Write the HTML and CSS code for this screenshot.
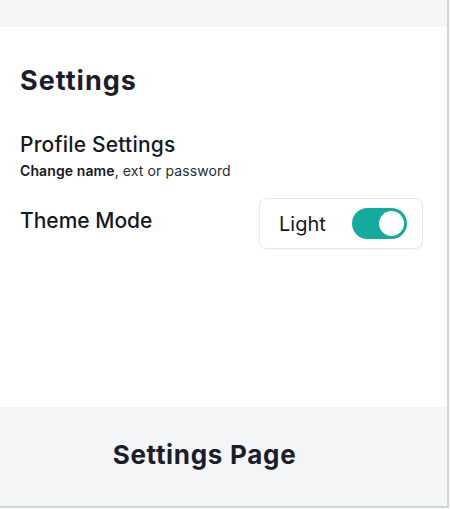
FILE: index.html
```html
<!DOCTYPE html>
<html>
<head>
<meta charset="utf-8">
<link rel="stylesheet" href="styles.css">
</head>
<body>
<div class="frame">
  <div class="topbar"></div>
  <main class="panel">
    <h1 class="title">Settings</h1>
    <section class="item">
      <h2 class="item-title">Profile Settings</h2>
      <p class="item-sub"><strong>Change name</strong>, ext or password</p>
    </section>
    <section class="row">
      <h2 class="item-title">Theme Mode</h2>
      <div class="toggle-card">
        <span class="toggle-label">Light</span>
        <span class="switch"><span class="knob"></span></span>
      </div>
    </section>
  </main>
  <footer class="footer">Settings Page</footer>
</div>
</body>
</html>
```
FILE: styles.css
```css
* { box-sizing: border-box; }
html, body { margin: 0; padding: 0; background: #ffffff; }
body { font-family: Inter, "Noto Sans", sans-serif; color: #1b1e2a; }
.frame {
  width: 449px;
  height: 508px;
  border-right: 2px solid #d3d5da;
  border-bottom: 2px solid #d3d5da;
  display: flex;
  flex-direction: column;
  background: #ffffff;
}
.topbar { height: 27px; background: #f6f6f8; flex: none; }
.panel { height: 380px; flex: none; padding: 37px 24px 0 20px; }
.title { margin: 0; font-size: 27px; font-weight: 700; line-height: 34px; letter-spacing: 1px; }
.item { margin-top: 34px; }
.item-title { margin: 0; font-size: 21px; font-weight: 500; line-height: 25px; letter-spacing: 0.2px; color: #16181f; }
.item-sub { margin: 5px 0 0; font-size: 14px; line-height: 18px; letter-spacing: 0.1px; color: #2a2d36; }
.item-sub strong { font-weight: 600; color: #16181f; }
.row { margin-top: 18px; display: flex; justify-content: space-between; align-items: flex-start; }
.row .item-title { margin-top: 10px; letter-spacing: 0; }
.toggle-card {
  width: 164px;
  height: 51px;
  border: 1px solid #e6e7ea;
  border-radius: 8px;
  display: flex;
  align-items: center;
  padding: 0 15px 0 19px;
  justify-content: space-between;
  box-shadow: 0 1px 2px rgba(0,0,0,0.03);
}
.toggle-label { font-size: 20px; color: #16181f; }
.switch {
  width: 55px; height: 31px; border-radius: 16px;
  background: #13ab9d;
  display: flex; align-items: center; justify-content: flex-end;
  padding-right: 3px;
}
.knob { width: 25px; height: 25px; border-radius: 50%; background: #ffffff; }
.footer {
  flex: 1;
  background: #f4f5f7;
  display: flex; align-items: center; justify-content: center;
  padding-right: 38px;
  font-size: 26px; font-weight: 700; letter-spacing: 0.7px; color: #1b1e2a;
  padding-bottom: 4px;
}
```
